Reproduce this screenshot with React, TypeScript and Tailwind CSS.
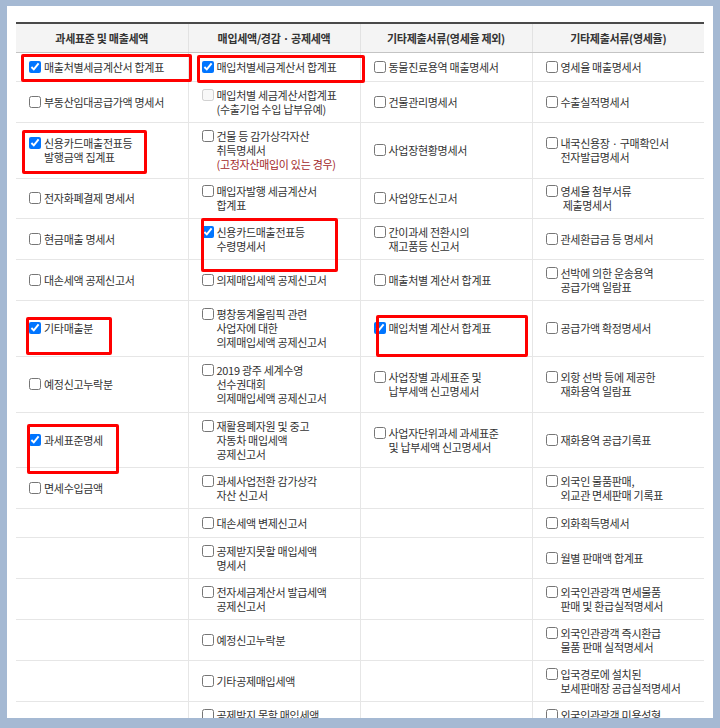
import React from "react";

type Cell = {
    lines: string[];
    checked?: boolean;
    disabled?: boolean;
    redLast?: boolean;
} | null;

type Row = { h: string; cells: Cell[] };

const headers = ["과세표준 및 매출세액", "매입세액/경감 · 공제세액", "기타제출서류(영세율 제외)", "기타제출서류(영세율)"];

const rows: Row[] = [
    {
        h: "h-[29px]", cells: [
            { lines: ["매출처별세금계산서 합계표"], checked: true },
            { lines: ["매입처별세금계산서 합계표"], checked: true },
            { lines: ["동물진료용역 매출명세서"] },
            { lines: ["영세율 매출명세서"] },
        ]
    },
    {
        h: "h-[41px]", cells: [
            { lines: ["부동산임대공급가액 명세서"] },
            { lines: ["매입처별 세금계산서합계표", "(수출기업 수입 납부유예)"], disabled: true },
            { lines: ["건물관리명세서"] },
            { lines: ["수출실적명세서"] },
        ]
    },
    {
        h: "h-[56px]", cells: [
            { lines: ["신용카드매출전표등", "발행금액 집계표"], checked: true },
            { lines: ["건물 등 감가상각자산", "취득명세서", "(고정자산매입이 있는 경우)"], redLast: true },
            { lines: ["사업장현황명세서"] },
            { lines: ["내국신용장 · 구매확인서", "전자발급명세서"] },
        ]
    },
    {
        h: "h-[40px]", cells: [
            { lines: ["전자화폐결제 명세서"] },
            { lines: ["매입자발행 세금계산서", "합계표"] },
            { lines: ["사업양도신고서"] },
            { lines: ["영세율 첨부서류", "\u00a0제출명세서"] },
        ]
    },
    {
        h: "h-[41px]", cells: [
            { lines: ["현금매출 명세서"] },
            { lines: ["신용카드매출전표등", "수령명세서"], checked: true },
            { lines: ["간이과세 전환시의", "재고품등 신고서"] },
            { lines: ["관세환급금 등 명세서"] },
        ]
    },
    {
        h: "h-[41px]", cells: [
            { lines: ["대손세액 공제신고서"] },
            { lines: ["의제매입세액 공제신고서"] },
            { lines: ["매출처별 계산서 합계표"] },
            { lines: ["선박에 의한 운송용역", "공급가액 일람표"] },
        ]
    },
    {
        h: "h-[56px]", cells: [
            { lines: ["기타매출분"], checked: true },
            { lines: ["평창동계올림픽 관련", "사업자에 대한", "의제매입세액 공제신고서"] },
            { lines: ["매입처별 계산서 합계표"], checked: true },
            { lines: ["공급가액 확정명세서"] },
        ]
    },
    {
        h: "h-[56px]", cells: [
            { lines: ["예정신고누락분"] },
            { lines: ["2019 광주 세계수영", "선수권대회", "의제매입세액 공제신고서"] },
            { lines: ["사업장별 과세표준 및", "납부세액 신고명세서"] },
            { lines: ["외항 선박 등에 제공한", "재화용역 일람표"] },
        ]
    },
    {
        h: "h-[55px]", cells: [
            { lines: ["과세표준명세"], checked: true },
            { lines: ["재활용폐자원 및 중고", "자동차 매입세액", "공제신고서"] },
            { lines: ["사업자단위과세 과세표준", "및 납부세액 신고명세서"] },
            { lines: ["재화용역 공급기록표"] },
        ]
    },
    {
        h: "h-[41px]", cells: [
            { lines: ["면세수입금액"] },
            { lines: ["과세사업전환 감가상각", "자산 신고서"] },
            null,
            { lines: ["외국인 물품판매,", "외교관 면세판매 기록표"] },
        ]
    },
    {
        h: "h-[29px]", cells: [
            null,
            { lines: ["대손세액 변제신고서"] },
            null,
            { lines: ["외화획득명세서"] },
        ]
    },
    {
        h: "h-[41px]", cells: [
            null,
            { lines: ["공제받지못할 매입세액", "명세서"] },
            null,
            { lines: ["월별 판매액 합계표"] },
        ]
    },
    {
        h: "h-[41px]", cells: [
            null,
            { lines: ["전자세금계산서 발급세액", "공제신고서"] },
            null,
            { lines: ["외국인관광객 면세물품", "판매 및 환급실적명세서"] },
        ]
    },
    {
        h: "h-[41px]", cells: [
            null,
            { lines: ["예정신고누락분"] },
            null,
            { lines: ["외국인관광객 즉시환급", "물품 판매 실적명세서"] },
        ]
    },
    {
        h: "h-[41px]", cells: [
            null,
            { lines: ["기타공제매입세액"] },
            null,
            { lines: ["입국경로에 설치된", "보세판매장 공급실적명세서"] },
        ]
    },
    {
        h: "h-[41px]", cells: [
            null,
            { lines: ["공제받지 못할 매입세액", "명세서"] },
            null,
            { lines: ["외국인관광객 미용성형", "의료용역 공급확인서"] },
        ]
    },
];

// 빨간 표시 박스 (패널 기준 좌표)
const marks = [
    "left-[14px] top-[48px] w-[171px] h-[28px]",
    "left-[190px] top-[49px] w-[168px] h-[28px]",
    "left-[15px] top-[124px] w-[125px] h-[44px]",
    "left-[194px] top-[212px] w-[137px] h-[54px]",
    "left-[19px] top-[311px] w-[86px] h-[38px]",
    "left-[369px] top-[309px] w-[152px] h-[42px]",
    "left-[20px] top-[418px] w-[92px] h-[50px]",
];

const CheckItem = ({ cell }: { cell: NonNullable<Cell> }) => (
    <div className="flex items-start">
        <input
            type="checkbox"
            defaultChecked={cell.checked}
            disabled={cell.disabled}
            className="m-0 mt-[1px] mr-[3px] h-[12px] w-[12px] shrink-0 accent-[#0075ff]"
        />
        <div>
            {cell.lines.map((line, i) => (
                <div
                    key={i}
                    className={cell.redLast && i === cell.lines.length - 1 ? "text-[#a3282b]" : ""}
                >
                    {line}
                </div>
            ))}
        </div>
    </div>
);

export default function App() {
    return (
        <div className="w-[720px] h-[728px] bg-[#a5b9d3] pt-[6px] pl-[7px] font-['Noto_Sans_CJK_KR',sans-serif]">
            <div className="relative w-[706px] h-[712px] overflow-hidden bg-white px-[9px] pt-[16px]">
                <table className="w-[688px] table-fixed border-collapse text-[11px] tracking-[-0.3px] leading-[14px] text-[#333]">
                    <thead>
                        <tr className="h-[29px] border-t-2 border-[#4a4a4a] bg-[#f4f4f4]">
                            {headers.map((h) => (
                                <th
                                    key={h}
                                    className="border-b border-[#c4c4c4] border-l border-l-[#e2e2e2] first:border-l-0 font-bold text-center align-middle"
                                >
                                    {h}
                                </th>
                            ))}
                        </tr>
                    </thead>
                    <tbody>
                        {rows.map((row, r) => (
                            <tr key={r} className={`${row.h} border-b border-[#e6e6e6]`}>
                                {row.cells.map((cell, c) => (
                                    <td
                                        key={c}
                                        className="border-l border-[#e6e6e6] first:border-l-0 pl-[13px] pr-[2px] py-0 align-middle"
                                    >
                                        {cell && <CheckItem cell={cell} />}
                                    </td>
                                ))}
                            </tr>
                        ))}
                    </tbody>
                </table>
                {marks.map((m) => (
                    <div key={m} className={`absolute ${m} rounded-[2px] border-[3px] border-[#ff0000]`} />
                ))}
            </div>
        </div>
    );
}
